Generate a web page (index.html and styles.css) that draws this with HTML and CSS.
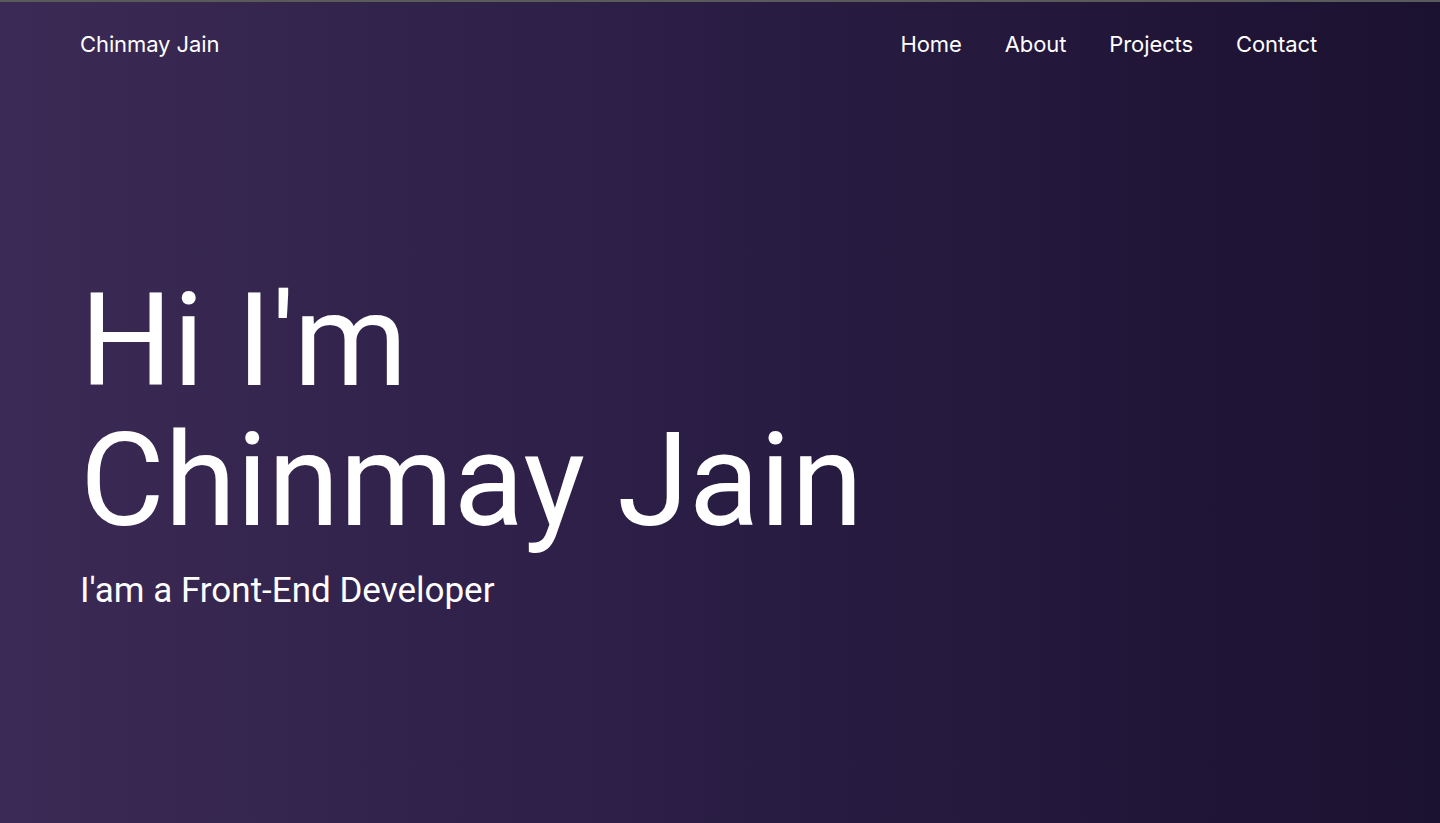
FILE: index.html
```html
<!DOCTYPE html>
<html lang="en">
<head>
<meta charset="utf-8">
<title>Chinmay Jain</title>
<link rel="stylesheet" href="styles.css">
</head>
<body>
<div class="page">
  <header class="nav">
    <a class="brand" href="#">Chinmay Jain</a>
    <nav class="links">
      <a href="#">Home</a>
      <a href="#">About</a>
      <a href="#">Projects</a>
      <a href="#">Contact</a>
    </nav>
  </header>
  <main class="hero">
    <h1 class="title">Hi I'm<br>Chinmay Jain</h1>
    <p class="subtitle">I'am a Front-End Developer</p>
  </main>
</div>
</body>
</html>
```
FILE: styles.css
```css
* { box-sizing: border-box; }
html, body { margin: 0; padding: 0; }
body {
  height: 823px;
  overflow: hidden;
  background: #1b1130;
}
.page {
  height: 823px;
  border-top: 2px solid #5a5a5a;
  background: linear-gradient(90deg, #3b2a55 0%, #2a1d44 50%, #1b1130 100%);
  color: #fff;
  display: flex;
  flex-direction: column;
}
.nav {
  display: flex;
  justify-content: space-between;
  align-items: center;
  padding: 0 123px 0 80px;
  height: 84px;
  font-family: Inter, "Liberation Sans", sans-serif;
  font-size: 22px;
}
.nav a { color: #fff; text-decoration: none; letter-spacing: -0.1px; }
.links { display: flex; gap: 43px; }
.hero {
  padding: 185px 80px 0 80px;
  font-family: Roboto, "Liberation Sans", sans-serif;
}
.title {
  margin: 0;
  font-weight: 400;
  font-size: 130px;
  line-height: 140px;
}
.subtitle {
  margin: 20px 0 0 0;
  font-size: 35px;
  line-height: 40px;
}
```
